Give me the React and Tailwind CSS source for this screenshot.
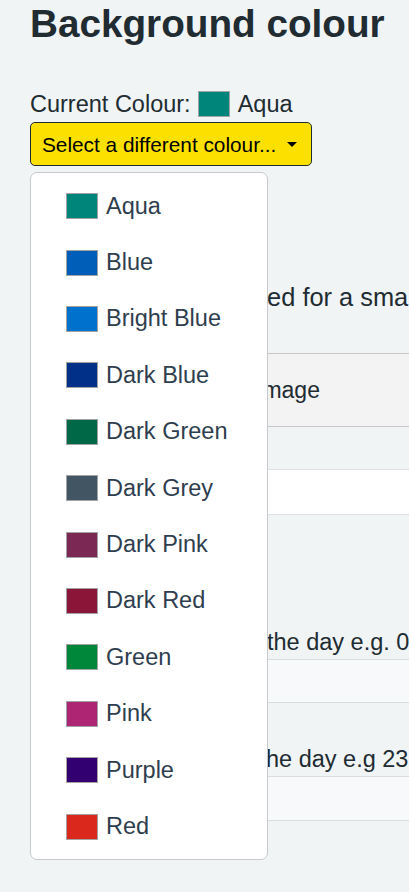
import React from 'react'

const colours = [
  { name: 'Aqua', bg: 'bg-[#00857a]' },
  { name: 'Blue', bg: 'bg-[#005eb8]' },
  { name: 'Bright Blue', bg: 'bg-[#0072ce]' },
  { name: 'Dark Blue', bg: 'bg-[#003087]' },
  { name: 'Dark Green', bg: 'bg-[#006747]' },
  { name: 'Dark Grey', bg: 'bg-[#425563]' },
  { name: 'Dark Pink', bg: 'bg-[#7c2855]' },
  { name: 'Dark Red', bg: 'bg-[#8a1538]' },
  { name: 'Green', bg: 'bg-[#00873a]' },
  { name: 'Pink', bg: 'bg-[#ae2573]' },
  { name: 'Purple', bg: 'bg-[#330072]' },
  { name: 'Red', bg: 'bg-[#da291c]' },
]

const Swatch = ({ bg, className = '' }) => (
  <span className={`inline-block h-[26px] w-[32px] shrink-0 border border-[#a3a3a3] ${bg} ${className}`} />
)

const App = () => {
  return (
    <div className="min-h-[892px] w-full overflow-hidden bg-[#f0f4f5] font-['Liberation_Sans',Arial,sans-serif] text-[#212b32]">
      <div className="pl-[30px]">
        <h1 className="mt-[1px] whitespace-nowrap text-[38.7px] font-bold leading-[1.2]">Background colour</h1>

        {/* current colour */}
        <div className="mt-[44px] flex h-[26px] items-center whitespace-nowrap text-[23.5px] leading-[26px]">
          <span>Current Colour:</span>
          <Swatch bg="bg-[#00857a]" className="ml-[7px]" />
          <span className="ml-[8px]">Aqua</span>
        </div>

        {/* dropdown */}
        <div className="relative z-10 mt-[5px] w-[282px]">
          <button className="flex h-[44px] w-[282px] items-center justify-between rounded-[5px] border border-[#212b32] bg-[#fce100] pl-[11px] pr-[14px] text-[20.8px] text-black">
            <span className="whitespace-nowrap">Select a different colour...</span>
            <svg width="10" height="5" viewBox="0 0 10 5">
              <path d="M0 0h10L5 5z" fill="#000" />
            </svg>
          </button>
          <div className="absolute left-0 top-[50px] w-[238px] rounded-[7px] border border-[#c6cacd] bg-white py-[4.6px] pl-[35px]">
            {colours.map((c) => (
              <div key={c.name} className="flex h-[56.4px] items-center whitespace-nowrap text-[23.5px] text-[#2f3e4e]">
                <Swatch bg={c.bg} />
                <span className="ml-[8px]">{c.name}</span>
              </div>
            ))}
          </div>
        </div>

        {/* page content behind the menu */}
        <p className="ml-[7px] mt-[117px] whitespace-nowrap text-[25.4px] leading-[28px]">Logo image to be used for a small screen</p>

        <div className="mt-[42px] w-[600px]">
          <div className="flex h-[74px] items-center border-y border-[#c8c8c8] bg-[#f3f3f3] text-[23px]">
            <span className="w-[226px] pl-[12px]">Colour</span>
            <span>Image</span>
          </div>
          <div className="h-[43px] border-b border-[#dde1e4]" />
          <div className="h-[45px] border-b border-[#dde1e4] bg-white" />
        </div>

        <p className="ml-[28px] mt-[113px] whitespace-nowrap text-[23.5px] leading-[28px]">Hour for the start of the day e.g. 07:00</p>
        <div className="mt-[3px] h-[44px] w-[600px] border-y border-[#d8dde0] bg-[#f7f9fa]" />

        <p className="ml-[27px] mt-[42px] whitespace-nowrap text-[23.5px] leading-[28px]">Hour for the end of the day e.g 23:00</p>
        <div className="mt-[3px] h-[45px] w-[600px] border-y border-[#d8dde0] bg-[#f7f9fa]" />
      </div>
    </div>
  )
}

export default App
